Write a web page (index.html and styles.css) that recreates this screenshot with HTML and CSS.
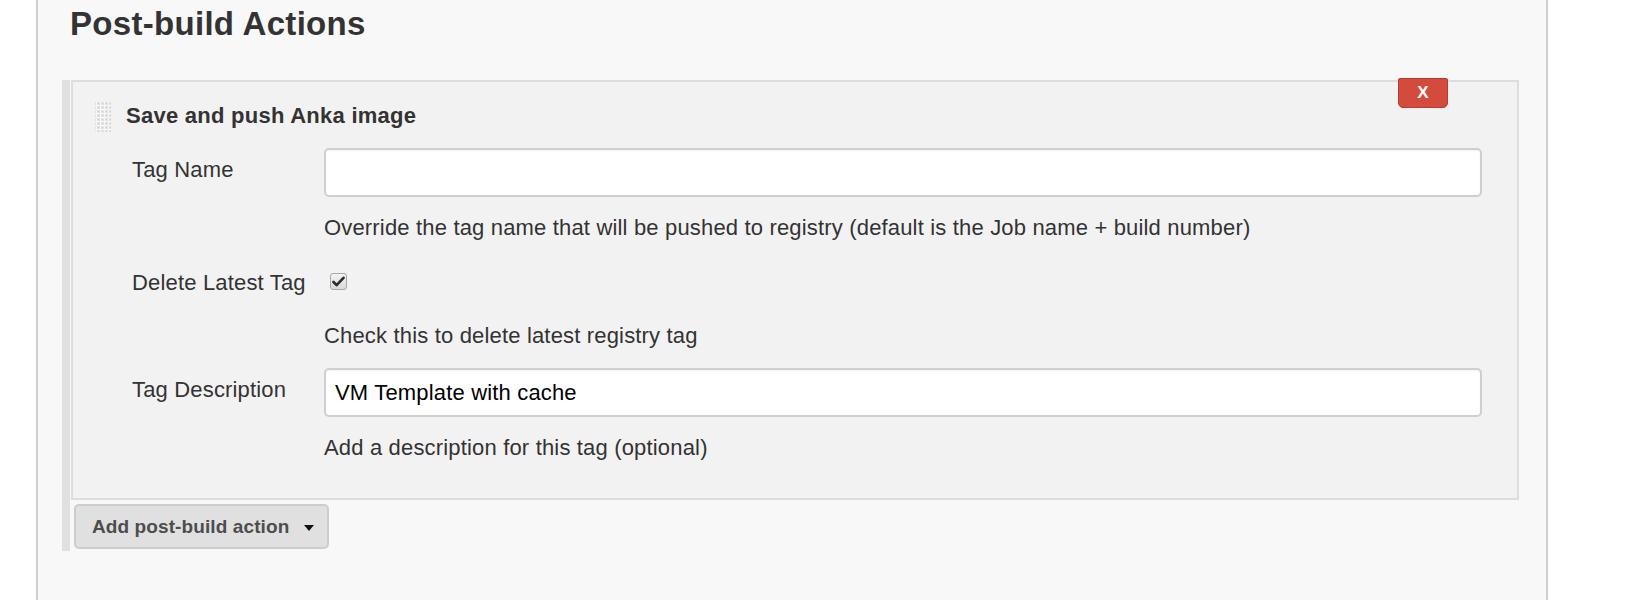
FILE: index.html
```html
<!DOCTYPE html>
<html lang="en">
<head>
<meta charset="utf-8">
<title>Post-build Actions</title>
<link rel="stylesheet" href="styles.css">
</head>
<body>
<div class="panel">
  <h1 class="title">Post-build Actions</h1>
  <div class="list">
    <div class="chunk">
      <button class="delete" type="button">X</button>
      <div class="chunk-header">
        <svg class="handle" width="19" height="30" viewBox="0 0 19 30" aria-hidden="true">
          <defs>
            <pattern id="dots" width="4" height="4" patternUnits="userSpaceOnUse">
              <rect x="0" y="0" width="4" height="4" fill="#f7f7f7"/>
              <rect x="0" y="0" width="3" height="3" fill="#e2e2e2"/>
              <rect x="1" y="1" width="1" height="1" fill="#cfcfcf"/>
            </pattern>
          </defs>
          <rect x="2" y="0" width="16" height="30" fill="url(#dots)"/>
        </svg>
        <span class="chunk-title">Save and push Anka image</span>
      </div>

      <div class="row row-name">
        <label class="label" for="tagName">Tag Name</label>
        <input class="text" id="tagName" type="text" value="">
      </div>
      <div class="help help-name">Override the tag name that will be pushed to registry (default is the Job name + build number)</div>

      <div class="row row-delete">
        <span class="label">Delete Latest Tag</span>
        <span class="cb">
          <svg width="13" height="11" viewBox="0 0 13 11" aria-hidden="true">
            <path d="M1.5 6 L4.6 9.2 L11.5 1.8" fill="none" stroke="#2b2b2b" stroke-width="2.6" stroke-linecap="round" stroke-linejoin="round"/>
          </svg>
        </span>
      </div>
      <div class="help help-delete">Check this to delete latest registry tag</div>

      <div class="row row-desc">
        <label class="label" for="tagDesc">Tag Description</label>
        <input class="text" id="tagDesc" type="text" value="VM Template with cache">
      </div>
      <div class="help help-desc">Add a description for this tag (optional)</div>
    </div>
    <button class="add" type="button">Add post-build action<span class="caret"></span></button>
  </div>
</div>
</body>
</html>
```

FILE: styles.css
```css
html, body {
  margin: 0;
  padding: 0;
  background: #ffffff;
}

body {
  font-family: "Liberation Sans", Arial, Helvetica, sans-serif;
  color: #333333;
}

.panel {
  box-sizing: border-box;
  margin-left: 36px;
  width: 1512px;
  min-height: 600px;
  border-left: 2px solid #cccccc;
  border-right: 2px solid #cccccc;
  background: #f8f8f8;
  padding: 4px 0 0 24px;
}

.title {
  margin: 0 0 0 8px;
  font-size: 33px;
  line-height: 40px;
  font-weight: bold;
  letter-spacing: 0.3px;
  color: #333333;
}

.list {
  margin-top: 36px;
  width: 1449px;
  border-left: 8px solid #e0e0e0;
  padding: 0 0 2px 1px;
}

.chunk {
  position: relative;
  box-sizing: border-box;
  width: 1448px;
  border: 2px solid #dddddd;
  background: #f2f2f2;
  padding: 19px 0 35px 20px;
}

.delete {
  position: absolute;
  top: -4px;
  right: 69px;
  width: 50px;
  height: 30px;
  box-sizing: border-box;
  margin: 0;
  padding: 0;
  border: 1px solid #b83b2d;
  border-radius: 2px 2px 5px 5px;
  background: #d44a3c;
  color: #ffffff;
  font-family: "Liberation Sans", Arial, sans-serif;
  font-size: 17px;
  font-weight: bold;
  line-height: 28px;
  text-align: center;
}

.chunk-header {
  display: flex;
  align-items: flex-start;
  gap: 14px;
  height: 30px;
}

.handle {
  display: block;
  margin-top: 1px;
  flex: none;
}

.chunk-title {
  font-size: 22px;
  line-height: 30px;
  font-weight: bold;
  letter-spacing: 0.26px;
  color: #333333;
}

.row {
  display: grid;
  grid-template-columns: 192px 1158px;
  align-items: start;
  margin-left: 39px;
}

.label {
  font-size: 22px;
  line-height: 30px;
  letter-spacing: 0.17px;
  color: #333333;
  padding-top: 7px;
}

.row-delete .label {
  padding-top: 0;
}

.text {
  box-sizing: border-box;
  width: 1158px;
  height: 49px;
  margin: 0;
  border: 2px solid #cfcfcf;
  border-radius: 5px;
  background: #ffffff;
  padding: 0 9px;
  font-family: "Liberation Sans", Arial, sans-serif;
  font-size: 22px;
  letter-spacing: 0.17px;
  color: #000000;
  box-shadow: inset 0 1px 2px rgba(0, 0, 0, 0.05);
}

.row-name {
  margin-top: 17px;
}

.row-delete {
  margin-top: 25px;
}

.row-desc {
  margin-top: 17px;
}

.cb {
  box-sizing: border-box;
  display: flex;
  align-items: center;
  justify-content: center;
  width: 17px;
  height: 17px;
  margin: 5px 0 0 6px;
  border: 1px solid #a8a8a8;
  border-radius: 3px;
  background: linear-gradient(#f4f4f4, #d9d9d9);
}

.help {
  margin-left: 231px;
  font-size: 22px;
  line-height: 30px;
  letter-spacing: 0.17px;
  color: #333333;
}

.help-name {
  margin-top: 16px;
}

.help-delete {
  margin-top: 23px;
}

.help-desc {
  margin-top: 16px;
}

.add {
  display: flex;
  align-items: center;
  box-sizing: border-box;
  margin: 4px 0 0 3px;
  width: 255px;
  height: 45px;
  padding: 0 0 0 16px;
  border: 2px solid #cdcdcd;
  border-radius: 5px;
  background: #e0e0e0;
  color: #4d4d4d;
  font-family: "Liberation Sans", Arial, sans-serif;
  font-size: 19px;
  font-weight: bold;
  letter-spacing: 0.1px;
  line-height: 41px;
}

.caret {
  display: block;
  width: 0;
  height: 0;
  margin-left: 15px;
  margin-top: 2px;
  border-top: 6px solid #111111;
  border-left: 5.5px solid transparent;
  border-right: 5.5px solid transparent;
}
```
